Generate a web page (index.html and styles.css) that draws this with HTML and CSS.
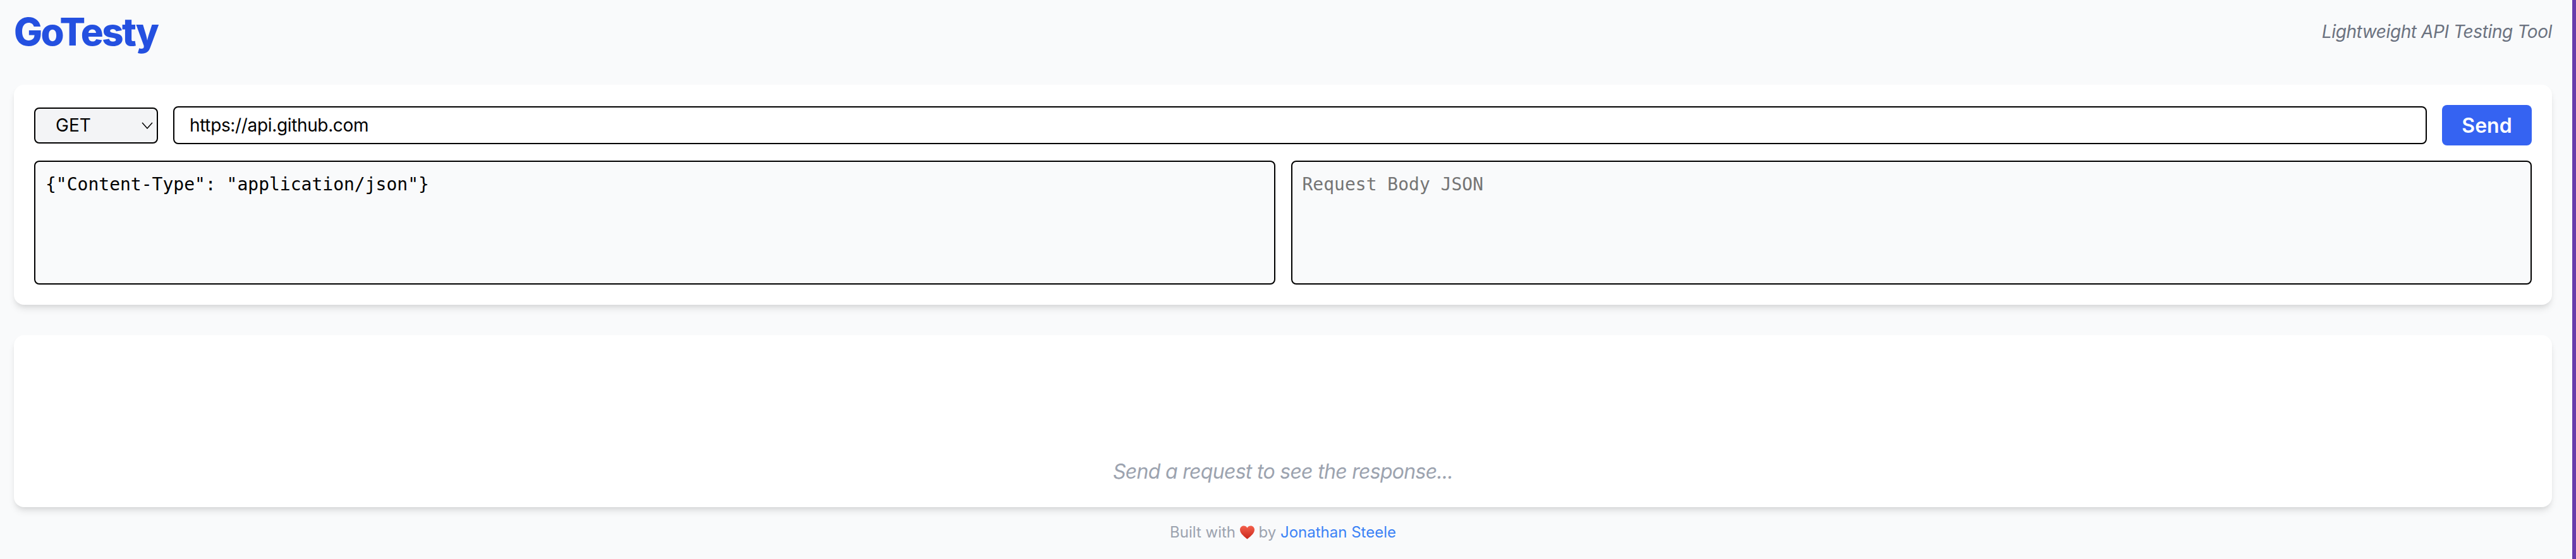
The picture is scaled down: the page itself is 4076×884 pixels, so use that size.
FILE: index.html
```html
<!DOCTYPE html>
<html lang="en">
<head>
    <meta charset="utf-8">
    <title>GoTesty</title>
    <link rel="stylesheet" href="styles.css">
</head>
<body>
<div class="page">
    <header class="top">
        <h1 class="logo">GoTesty</h1>
        <p class="tagline">Lightweight API Testing Tool</p>
    </header>

    <section class="card request">
        <div class="url-row">
            <select id="method" class="method">
                <option>GET</option>
                <option>POST</option>
                <option>PUT</option>
                <option>DELETE</option>
            </select>
            <input id="url" class="url" type="text" value="https://api.github.com">
            <button class="send" type="button">Send</button>
        </div>
        <div class="body-row">
            <textarea id="headers" class="code">{"Content-Type": "application/json"}</textarea>
            <textarea id="body" class="code" placeholder="Request Body JSON"></textarea>
        </div>
    </section>

    <section class="card response">
        <p class="empty">Send a request to see the response...</p>
    </section>

    <footer class="foot">
        Built with
        <svg class="heart" viewBox="0 0 24 22" aria-label="love">
            <defs>
                <linearGradient id="heartFill" x1="0" y1="0" x2="0" y2="1">
                    <stop offset="0" stop-color="#f4604c"/>
                    <stop offset="1" stop-color="#c9261a"/>
                </linearGradient>
            </defs>
            <path fill="url(#heartFill)" d="M12 22C9 19 0 13.500 0 6.500 0 2.800 2.800 0 6.300 0 8.700 0 10.900 1.300 12 3.400 13.100 1.300 15.300 0 17.700 0 21.200 0 24 2.800 24 6.500 24 13.500 15 19 12 22Z"/>
        </svg>
        by <a href="#">Jonathan Steele</a>
    </footer>
</div>
</body>
</html>
```

FILE: styles.css
```css
* {
    box-sizing: border-box;
}

html, body {
    height: 100%;
}

body {
    margin: 0;
    background-color: #f9fafb;
    font-family: Inter, "Noto Sans", sans-serif;
    overflow: hidden;
}

.page {
    height: 100%;
    padding: 0 32px 0 22px;
    border-right: 6px solid #683cab;
}

.top {
    display: flex;
    align-items: center;
    justify-content: space-between;
    height: 134px;
    padding-bottom: 34px;
}

.logo {
    margin: 0;
    font-size: 60px;
    font-weight: 800;
    letter-spacing: -2.6px;
    line-height: 72px;
    color: #2450e0;
}

.tagline {
    margin: 0;
    font-size: 28px;
    font-style: italic;
    letter-spacing: -0.4px;
    color: #6b7280;
}

.card {
    background-color: #fff;
    border-radius: 16px;
    box-shadow: 0 8px 12px -2px rgba(0, 0, 0, 0.1), 0 4px 8px -4px rgba(0, 0, 0, 0.1);
    padding: 32px;
}

.url-row {
    display: flex;
    align-items: center;
    gap: 24px;
}

.method {
    appearance: none;
    width: 196px;
    height: 57px;
    padding: 0 32px;
    border: 2px solid #000;
    border-radius: 8px;
    background: #f3f4f6 url("data:image/svg+xml,%3Csvg xmlns='http://www.w3.org/2000/svg' width='18' height='11'%3E%3Cpath d='M1 1l8 9 8-9' fill='none' stroke='%23000' stroke-width='1.500'/%3E%3C/svg%3E") no-repeat right 6px center;
    font: 28px Inter, sans-serif;
    color: #000;
}

.url {
    flex: 1;
    height: 60px;
    padding: 0 24px;
    border: 2px solid #000;
    border-radius: 8px;
    background: #fff;
    font: 28px Inter, sans-serif;
    letter-spacing: -0.35px;
    color: #000;
    outline-style: none;
}

.send {
    width: 142px;
    height: 64px;
    border: none;
    border-radius: 8px;
    background-color: #3563f2;
    color: #fff;
    font: 600 32px Inter, sans-serif;
    cursor: pointer;
}

.body-row {
    display: grid;
    grid-template-columns: 1fr 1fr;
    gap: 25px;
    margin-top: 24px;
}

.code {
    display: block;
    width: 100%;
    height: 196px;
    padding: 19px 16px 16px;
    border: 2px solid #000;
    border-radius: 8px;
    background-color: #f9fafb;
    font: 28px "DejaVu Sans Mono", monospace;
    color: #000;
    resize: none;
    outline-style: none;
}

.response {
    display: flex;
    align-items: flex-end;
    justify-content: center;
    height: 272px;
    margin-top: 48px;
}

.empty {
    margin: 0;
    font-size: 32px;
    font-style: italic;
    letter-spacing: -0.7px;
    line-height: 48px;
    color: #9ca3af;
}

.foot {
    margin-top: 24px;
    font-size: 24px;
    line-height: 32px;
    text-align: center;
    color: #9ca3af;
}

.foot a {
    color: #3b82f6;
    text-decoration: none;
}

.heart {
    width: 23px;
    height: 22px;
    vertical-align: -3px;
}
```
